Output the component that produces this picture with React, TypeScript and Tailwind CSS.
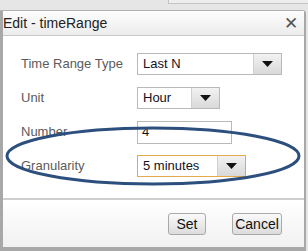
import React from "react";

function Arrow() {
  return (
    <svg width="11" height="6" viewBox="0 0 11 6">
      <path d="M0 0 L11 0 L5.5 6 Z" fill="#111" />
    </svg>
  );
}

function Select({ value, w, focused }: { value: string; w: string; focused?: boolean }) {
  return (
    <div
      className={`${w} h-[22px] flex items-stretch bg-white border ${
        focused ? "border-[#e2a94f]" : "border-[#b9b9b9]"
      }`}
    >
      <div className="flex-1 flex items-center pl-[5px] text-[13px] text-[#111122]">{value}</div>
      <div className="w-[28px] flex items-center justify-center bg-gradient-to-b from-[#f2f2f2] to-[#d9d9d9] border-l border-[#d0d0d0]">
        <Arrow />
      </div>
    </div>
  );
}

export default function App() {
  return (
    <div
      className="relative w-[308px] h-[251px] bg-[#e6e6e6] overflow-hidden"
      style={{ fontFamily: '"Liberation Sans", Arial, sans-serif' }}
    >
      <div className="h-[10px] flex">
        <div className="w-[168px]" />
        <div className="flex-1 h-[4px] border-l border-b border-[#c4c4c4] bg-[#eeeeee]" />
      </div>
      <div className="w-[306px] h-[241px] flex flex-col border-t border-r-2 border-b-4 border-l-[3px] border-[#a8a8a8] border-t-[#b0b0b0] rounded-tr-[4px] bg-white">
        <div className="h-[25px] flex items-center justify-between pl-[0px] pr-[6px] bg-gradient-to-b from-[#fdfdfd] to-[#ececec] border-b border-[#c9c9c9]">
          <span className="text-[14px] text-[#222]">Edit - timeRange</span>
          <span className="text-[#555] text-[17px] leading-none">✕</span>
        </div>
        <div className="h-[162px] pt-[17px] pl-[18px] flex flex-col gap-[12px] bg-white">
          <div className="flex items-center h-[22px]">
            <div className="w-[116px] text-[13px] text-[#5b5b5b]">Time Range Type</div>
            <Select value="Last N" w="w-[145px]" />
          </div>
          <div className="flex items-center h-[22px]">
            <div className="w-[116px] text-[13px] text-[#5b5b5b]">Unit</div>
            <Select value="Hour" w="w-[83px]" />
          </div>
          <div className="flex items-center h-[22px]">
            <div className="w-[116px] text-[13px] text-[#5b5b5b]">Number</div>
            <div className="w-[95px] h-[23px] border border-[#b9b9b9] flex items-center pl-[4px] text-[13px] text-[#111]">4</div>
          </div>
          <div className="flex items-center h-[22px]">
            <div className="w-[116px] text-[13px] text-[#5b5b5b]">Granularity</div>
            <Select value="5 minutes" w="w-[109px]" focused />
          </div>
        </div>
        <div className="flex-1 border-t-2 border-[#cfcfcf] bg-gradient-to-b from-[#ffffff] to-[#f1f1f1] flex justify-end items-start pt-[13px] pr-[22px] gap-[26px]">
          <button className="w-[38px] h-[22px] rounded-[3px] border border-[#a9a9a9] bg-gradient-to-b from-[#fafafa] to-[#dcdcdc] text-[14px] text-[#111] leading-none">
            Set
          </button>
          <button className="w-[50px] h-[22px] rounded-[3px] border border-[#a9a9a9] bg-gradient-to-b from-[#fafafa] to-[#dcdcdc] text-[14px] text-[#111] leading-none">
            Cancel
          </button>
        </div>
      </div>
      <svg className="absolute left-0 top-0 pointer-events-none" width="308" height="251">
        <ellipse cx="153" cy="156" rx="146" ry="28" fill="none" stroke="#2c4f7d" strokeWidth="3" />
      </svg>
    </div>
  );
}
